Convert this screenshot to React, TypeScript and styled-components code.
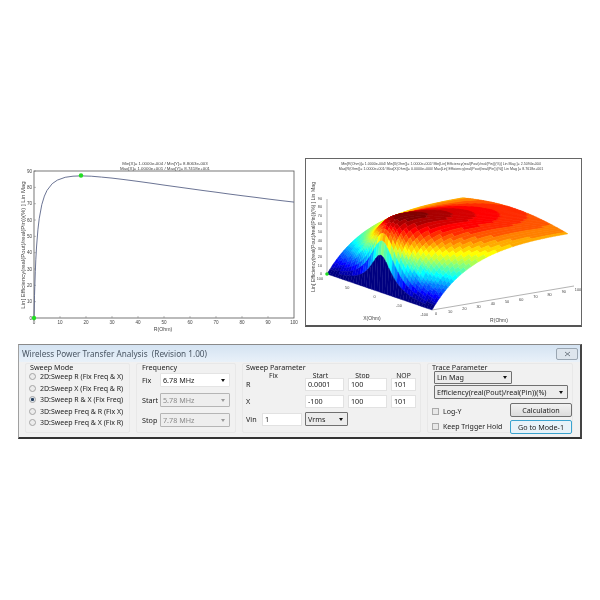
import React from "react";
import styled, { createGlobalStyle } from "styled-components";

const GlobalStyle = createGlobalStyle`
  html, body {
    margin: 0;
    padding: 0;
    background: #fff;
  }
`;

const Page = styled.div`
  width: 600px;
  height: 600px;
  padding-top: 158px;
  box-sizing: border-box;
  overflow: hidden;
  background: #fff;
  font-family: "Noto Sans", "Liberation Sans", sans-serif;
  filter: blur(0.35px);
`;

const Plots = styled.div`
  display: flex;
  height: 176px;
  padding-left: 10px;
`;

const LeftPlot = styled.svg`
  display: block;
  width: 295px;
  height: 176px;
`;

const RightPanel = styled.div`
  width: 277px;
  height: 169px;
  box-sizing: border-box;
  border: 1px solid #666;
  border-bottom: 2px solid #555;
  background: #fff;
`;

const RightPlot = styled.svg`
  display: block;
  width: 275px;
  height: 166px;
`;

const Window = styled.div`
  margin: 10px 0 0 18px;
  width: 564px;
  height: 95px;
  box-sizing: border-box;
  border: 1px solid #a0a0a0;
  border-top-color: #8a8a8a;
  border-bottom: 2px solid #333;
  border-right: 2px solid #444;
  background: #f1f1f1;
  color: #222;
`;

const TitleBar = styled.div`
  display: flex;
  align-items: center;
  justify-content: space-between;
  height: 17px;
  padding: 0 2px 0 3px;
  background: linear-gradient(#d4e3f2, #e9f1f9);
  color: #4a5663;
  font-size: 8.2px;
  white-space: pre;
`;

const CloseButton = styled.div`
  display: flex;
  align-items: center;
  justify-content: center;
  width: 20px;
  height: 10px;
  border: 1px solid #9aa6b2;
  border-radius: 2px;
  background: #dde5ed;
`;

const Groups = styled.div`
  display: flex;
  gap: 6px;
  padding: 1px 0 0 6px;
`;

const Group = styled.div<{ $width: number }>`
  width: ${(p) => p.$width}px;
  height: 70px;
  box-sizing: border-box;
  border: 1px solid #e8e8e8;
  border-radius: 2px;
  font-size: 7.2px;
  line-height: 9px;
`;

const GroupTitle = styled.div<{ $left: number }>`
  padding-left: ${(p) => p.$left}px;
  height: 9px;
  margin-top: -1px;
  white-space: nowrap;
`;

const RadioList = styled.div`
  display: flex;
  flex-direction: column;
  gap: 2.6px;
  padding: 0 0 0 3px;
`;

const RadioRow = styled.div`
  display: flex;
  align-items: center;
  gap: 4px;
  white-space: nowrap;
  font-size: 7px;
`;

const Radio = styled.span<{ $on?: boolean }>`
  width: 7px;
  height: 7px;
  box-sizing: border-box;
  border: 1px solid #a4a4a4;
  border-radius: 50%;
  background: ${(p) =>
    p.$on ? "radial-gradient(circle, #27405f 0 35%, #dfe6ee 55%)" : "#ececec"};
`;

const FreqGrid = styled.div`
  display: grid;
  grid-template-columns: 18px 70px;
  grid-auto-rows: 14px;
  row-gap: 6px;
  align-items: center;
  padding: 1px 0 0 5px;
`;

const Select = styled.div<{ $disabled?: boolean; $light?: boolean; $width?: number; $height?: number }>`
  display: flex;
  align-items: center;
  justify-content: space-between;
  width: ${(p) => (p.$width ? `${p.$width}px` : "auto")};
  height: ${(p) => p.$height ?? 14}px;
  box-sizing: border-box;
  padding: 0 4px 0 2px;
  border: 1px solid ${(p) => (p.$disabled ? "#b5b5b5" : p.$light ? "#e4e4e4" : "#707070")};
  border-radius: 1px;
  background: ${(p) => (p.$disabled ? "#eeeeee" : p.$light ? "#fff" : "#ececec")};
  color: ${(p) => (p.$disabled ? "#8a8a8a" : "#222")};
  white-space: nowrap;
`;

const Arrow = styled.span<{ $disabled?: boolean }>`
  width: 0;
  height: 0;
  border-left: 2.5px solid transparent;
  border-right: 2.5px solid transparent;
  border-top: 3px solid ${(p) => (p.$disabled ? "#999" : "#111")};
`;

const SweepGrid = styled.div`
  display: grid;
  grid-template-columns: 16px 43px 43px 43px 25px;
  grid-template-rows: 6px 13px 4px 13px 4px 14px;
  align-items: center;
  padding: 0 0 0 3px;
`;

const ColumnHead = styled.div<{ $offset?: number }>`
  text-align: center;
  height: 6px;
  font-size: 6.8px;
  line-height: 6px;
  margin-top: 1px;
  padding-right: ${(p) => p.$offset ?? 4}px;
`;

const RowGap = styled.span`
  grid-column: 1 / -1;
`;

const NumberBox = styled.div<{ $width: number }>`
  display: flex;
  align-items: center;
  width: ${(p) => p.$width}px;
  height: 13px;
  box-sizing: border-box;
  padding-left: 2px;
  border: 1px solid #e2e2e2;
  background: #fff;
`;

const TraceBody = styled.div`
  display: flex;
  flex-direction: column;
  margin-top: -1px;
  padding: 0 0 0 6px;
`;

const TraceSelects = styled.div`
  display: flex;
  flex-direction: column;
  gap: 1px;
  align-items: flex-start;
`;

const TraceFooter = styled.div`
  display: flex;
  justify-content: space-between;
  margin-top: 4px;
`;

const Checks = styled.div`
  display: flex;
  flex-direction: column;
  gap: 7px;
  padding-top: 4px;
`;

const CheckRow = styled.div`
  display: flex;
  align-items: center;
  gap: 4px;
  height: 8px;
  margin-left: -2px;
  white-space: nowrap;
  font-size: 7px;
`;

const Check = styled.span`
  width: 7px;
  height: 7px;
  box-sizing: border-box;
  border: 1px solid #aaa;
  background: #e8e8e8;
`;

const Buttons = styled.div`
  display: flex;
  flex-direction: column;
  gap: 3px;
`;

const Button = styled.div<{ $focus?: boolean }>`
  display: flex;
  align-items: center;
  justify-content: center;
  width: 62px;
  height: 14px;
  box-sizing: border-box;
  border: 1px solid ${(p) => (p.$focus ? "#3aa3cf" : "#707070")};
  border-radius: 2px;
  background: ${(p) => (p.$focus ? "#e8f3f9" : "linear-gradient(#f2f2f2, #dcdcdc)")};
  font-size: 7.2px;
`;

const efficiency = (r: number, x: number) => {
  const r0 = 1.25;
  const w = 323;
  return (100 * r * w) / (r0 * ((r + r0) * (r + r0) + x * x) + w * (r + r0));
};

// reactance counts for less at large R, so the far edge of the surface stays high
const surfaceZ = (r: number, x: number) => efficiency(r, x * (1 - 0.3 * (r / 100)));

const jet = (t: number) => {
  const v = Math.max(0, Math.min(1, t));
  const c = (o: number) => Math.round(255 * Math.max(0, Math.min(1, 1.5 - Math.abs(4 * v - o))));
  return `rgb(${c(3)},${c(2)},${c(1)})`;
};

// page coords of the surface, minus the panel origin
const project = (r: number, x: number, z: number, span = 136): [number, number] => {
  const u = (100 - x) / 200;
  const v = r / 100;
  return [21 + 105 * u + span * v, 115 + 36 * u - 24 * v - 0.835 * z];
};

const buildSurface = () => {
  const out: { d: string; fill: string }[] = [];
  const levels = 24;
  const dx = 5;
  for (let x = 100; x > -100; x -= dx) {
    let current = "";
    let d = "";
    for (let r = 100; r > 0; r -= 1) {
      const a = project(r - 1, x, surfaceZ(r - 1, x));
      const b = project(r, x, surfaceZ(r, x));
      const c = project(r, x - dx, surfaceZ(r, x - dx));
      const e = project(r - 1, x - dx, surfaceZ(r - 1, x - dx));
      const low = surfaceZ(r - 1, x);
      const fill = jet(Math.floor((low / 85) * levels) / levels);
      if (fill !== current && d) {
        out.push({ d, fill: current });
        d = "";
      }
      current = fill;
      d += `M${a[0].toFixed(1)} ${a[1].toFixed(1)}L${b[0].toFixed(1)} ${b[1].toFixed(1)}L${c[0].toFixed(1)} ${c[1].toFixed(1)}L${e[0].toFixed(1)} ${e[1].toFixed(1)}Z`;
    }
    if (d) out.push({ d, fill: current });
  }
  return out;
};

const surface = buildSurface();

const curve = (() => {
  const pts: string[] = [];
  const rs = [0.0001, 0.1, 0.2, 0.3, 0.5, 0.7, 1, 1.5, 2, 3, 4, 5, 7, 9, 12, 15, 18, 22, 26, 30];
  for (let r = 35; r <= 100; r += 5) rs.push(r);
  rs.forEach((r) => {
    pts.push(`${(24 + 2.6 * r).toFixed(1)},${(160 - 1.633 * efficiency(r, 0)).toFixed(1)}`);
  });
  return pts.join(" ");
})();

const Curve2D = () => (
  <LeftPlot viewBox="0 0 295 176">
    <g fontFamily="Liberation Sans, sans-serif" fill="#444">
      <text x="155" y="7" fontSize="4.4" textAnchor="middle">Min[X]= 1.0000e-004 / Min[Y]= 8.8063e-003</text>
      <text x="155" y="12" fontSize="4.4" textAnchor="middle">Max[X]= 1.0000e+001 / Max[Y]= 8.7418e+001</text>
      {[0, 10, 20, 30, 40, 50, 60, 70, 80, 90].map((v) => (
        <text key={v} x="22" y={161.5 - v * 1.633} fontSize="4.6" textAnchor="end">{v}</text>
      ))}
      {[0, 10, 20, 30, 40, 50, 60, 70, 80, 90, 100].map((v) => (
        <text key={v} x={24 + v * 2.6} y="166" fontSize="4.6" textAnchor="middle">{v}</text>
      ))}
      <text x="153" y="173" fontSize="5.2" textAnchor="middle">R(Ohm)</text>
      <text transform="translate(15 87) rotate(-90)" fontSize="6" textAnchor="middle">
        Lin[ Efficiency(real(Pout)/real(Pin))(%) ] Lin Mag
      </text>
    </g>
    <rect x="24" y="13" width="260" height="147" fill="#fff" stroke="#555" strokeWidth="0.8" />
    {[10, 20, 30, 40, 50, 60, 70, 80, 90].map((v) => (
      <g key={v} stroke="#777" strokeWidth="0.5">
        <line x1={24 + v * 2.6} x2={24 + v * 2.6} y1="160" y2="158" />
        <line x1="24" x2="26" y1={160 - v * 1.633} y2={160 - v * 1.633} />
      </g>
    ))}
    <polyline points={curve} fill="none" stroke="#5a6488" strokeWidth="0.9" />
    <circle cx="24" cy="160" r="2.2" fill="#22dd22" />
    <circle cx="71" cy="17.5" r="2.2" fill="#22dd22" />
  </LeftPlot>
);

const Surface3D = () => (
  <RightPlot viewBox="0 0 275 166">
    <g fontFamily="Liberation Sans, sans-serif" fill="#444">
      <text x="135" y="6" fontSize="3.6" textAnchor="middle">
        Min[R(Ohm)]= 1.0000e-004/ Min[X(Ohm)]= 1.0000e+002/ Min[Lin[ Efficiency(real(Pout)/real(Pin))(%)] Lin Mag ]= 2.5094e-004
      </text>
      <text x="135" y="10.5" fontSize="3.6" textAnchor="middle">
        Max[R(Ohm)]= 1.0000e+001/ Max[X(Ohm)]= 0.0000e+000/ Max[Lin[ Efficiency(real(Pout)/real(Pin))(%)] Lin Mag ]= 8.7618e+001
      </text>
      {[0, 10, 20, 30, 40, 50, 60, 70, 80, 90].map((v) => (
        <text key={v} x="16" y={116 - v * 0.835} fontSize="3.8" textAnchor="end">{v}</text>
      ))}
      {[100, 50, 0, -50, -100].map((v) => {
        const [px, py] = project(0, v, 0);
        return (
          <text key={v} x={px - 4} y={py + 6} fontSize="3.8" textAnchor="end">{v}</text>
        );
      })}
      {[0, 10, 20, 30, 40, 50, 60, 70, 80, 90, 100].map((v) => {
        const [px, py] = project(v, -100, 0, 142);
        return (
          <text key={v} x={px + 4} y={py + 5} fontSize="3.8" textAnchor="middle">{v}</text>
        );
      })}
      <text x="66" y="161" fontSize="5" textAnchor="middle">X(Ohm)</text>
      <text x="193" y="163" fontSize="5" textAnchor="middle">R(Ohm)</text>
      <text transform="translate(9 78) rotate(-90)" fontSize="5.2" textAnchor="middle">
        Lin[ Efficiency(real(Pout)/real(Pin))(%) ] Lin Mag
      </text>
    </g>
    <g stroke="#666" strokeWidth="0.5">
      <line x1="21" y1="40" x2="21" y2="115" />
      <line x1="126" y1="151" x2="268" y2="127" />
    </g>
    {surface.map((s, i) => (
      <path key={i} d={s.d} fill={s.fill} stroke={s.fill} strokeWidth="0.4" />
    ))}
    <circle cx="21" cy="115" r="1.8" fill="#22dd22" />
  </RightPlot>
);

const modes = [
  "2D:Sweep R (Fix Freq & X)",
  "2D:Sweep X (Fix Freq & R)",
  "3D:Sweep R & X (Fix Freq)",
  "3D:Sweep Freq & R (Fix X)",
  "3D:Sweep Freq & X (Fix R)",
];

export default function App() {
  return (
    <Page>
      <GlobalStyle />
      <Plots>
        <Curve2D />
        <RightPanel>
          <Surface3D />
        </RightPanel>
      </Plots>
      <Window>
        <TitleBar>
          <span>{"Wireless Power Transfer Analysis  (Revision 1.00)"}</span>
          <CloseButton>
            <svg width="7" height="6" viewBox="0 0 7 6">
              <path d="M1 1L6 5M6 1L1 5" stroke="#68727c" strokeWidth="0.9" />
            </svg>
          </CloseButton>
        </TitleBar>
        <Groups>
          <Group $width={105}>
            <GroupTitle $left={4}>Sweep Mode</GroupTitle>
            <RadioList>
              {modes.map((m, i) => (
                <RadioRow key={m}>
                  <Radio $on={i === 2} />
                  {m}
                </RadioRow>
              ))}
            </RadioList>
          </Group>
          <Group $width={100}>
            <GroupTitle $left={5}>Frequency</GroupTitle>
            <FreqGrid>
              <span>Fix</span>
              <Select $light>6.78 MHz<Arrow /></Select>
              <span>Start</span>
              <Select $disabled>5.78 MHz<Arrow $disabled /></Select>
              <span>Stop</span>
              <Select $disabled>7.78 MHz<Arrow $disabled /></Select>
            </FreqGrid>
          </Group>
          <Group $width={179}>
            <GroupTitle $left={3}>Sweep Parameter</GroupTitle>
            <SweepGrid>
              <span />
              <ColumnHead $offset={20}>Fix</ColumnHead>
              <ColumnHead $offset={12}>Start</ColumnHead>
              <ColumnHead $offset={14}>Stop</ColumnHead>
              <ColumnHead $offset={0}>NOP</ColumnHead>

              <span>R</span>
              <span />
              <NumberBox $width={39}>0.0001</NumberBox>
              <NumberBox $width={39}>100</NumberBox>
              <NumberBox $width={25}>101</NumberBox>

              <RowGap />

              <span>X</span>
              <span />
              <NumberBox $width={39}>-100</NumberBox>
              <NumberBox $width={39}>100</NumberBox>
              <NumberBox $width={25}>101</NumberBox>

              <RowGap />

              <span>Vin</span>
              <NumberBox $width={40}>1</NumberBox>
              <Select $width={43}>Vrms<Arrow /></Select>
            </SweepGrid>
          </Group>
          <Group $width={146}>
            <GroupTitle $left={4}>Trace Parameter</GroupTitle>
            <TraceBody>
              <TraceSelects>
                <Select $width={78} $height={13}>Lin Mag<Arrow /></Select>
                <Select $width={134}>Efficiency(real(Pout)/real(Pin))(%)<Arrow /></Select>
              </TraceSelects>
              <TraceFooter>
                <Checks>
                  <CheckRow><Check />Log-Y</CheckRow>
                  <CheckRow><Check />Keep Trigger Hold</CheckRow>
                </Checks>
                <Buttons>
                  <Button>Calculation</Button>
                  <Button $focus>Go to Mode-1</Button>
                </Buttons>
              </TraceFooter>
            </TraceBody>
          </Group>
        </Groups>
      </Window>
    </Page>
  );
}
